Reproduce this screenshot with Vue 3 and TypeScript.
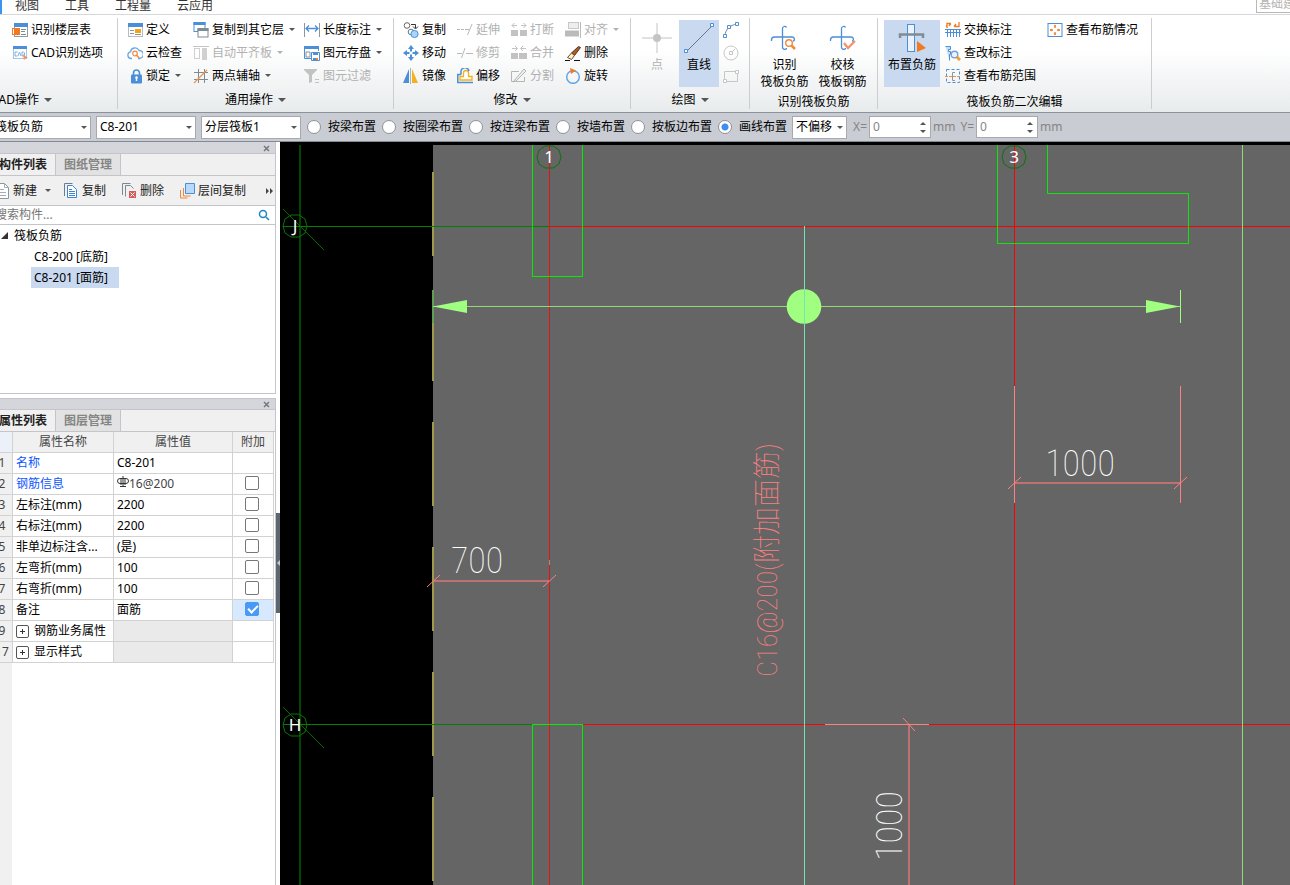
<script setup lang="ts">
import { ref } from 'vue'

interface Tool {
  icon: string
  label: string
  off?: boolean
  menu?: boolean
}

interface PropertyRow {
  no: string
  name: string
  value?: string
  key?: boolean
  rebar?: boolean
  check?: boolean
  group?: boolean
}

const blue = '#4a8fd8'
const grey = '#b9b9b9'

const icons: Record<string, string> = {
  floor: `<rect x="2.5" y="1.5" width="13" height="13" fill="#fff" stroke="#8d9aa8"/><path d="M2 1h14v4H2z" fill="${blue}"/><rect x=".5" y="6.500" width="7" height="6" fill="#fff" stroke="#f07a22"/><path d="M2 7h5v5H2z" fill="#f07a22"/><path d="M9 7.500h5M9 9.500h4M9 12.500h5" stroke="#7d8a96"/>`,
  cad: `<rect x="1.500" y="1.500" width="13" height="12" fill="#fff" stroke="#a5c4e6"/><path d="M1 1h14v3H1z" fill="${blue}"/><path d="M5.500 7H3v4h2.500M6 11l1.500-4L9 11M10 7v4h1.500l1-1V8l-1-1z" fill="none" stroke="#7fb0e4"/><path d="M11 9l5 4-3 .5-1 2z" fill="#f5906a"/>`,
  define: `<rect x="1.500" y="1.500" width="14" height="13" fill="#fff" stroke="#b7bcc1"/><path d="M1 1h15v4H1z" fill="${blue}"/><path d="M3 8.500h4M3 11.500h4M8 12.500h6" stroke="#8b97a3"/><path d="M8 7h6v4H8z" fill="#f6a21b"/>`,
  cloud: `<path d="M5 13.500H4a3.400 3.400 0 0 1-.5-6.700A4.500 4.500 0 0 1 12 5.500a4 4 0 0 1 .5 8H11" fill="none" stroke="#6aa9e8" stroke-width="1.300"/><circle cx="8" cy="8.500" r="2.300" fill="none" stroke="#f28a3c" stroke-width="1.200"/><path d="M9.700 10.300l2.500 2.700" stroke="#f28a3c" stroke-width="1.500"/>`,
  lock: `<path d="M6.500 7V5a3 3 0 0 1 6 0v2" fill="none" stroke="${blue}" stroke-width="1.600"/><rect x="4" y="6.500" width="11" height="9" rx="1" fill="${blue}"/><path d="M9.500 9v4" stroke="#fff" stroke-width="1.500"/><circle cx="9.500" cy="9.500" r="1.200" fill="#fff"/>`,
  floors: `<rect x="1" y=".5" width="11" height="9" fill="#fff" stroke="${blue}"/><path d="M.5 0h12v3H.5z" fill="${blue}"/><rect x="5" y="7" width="10" height="8" fill="#fff" stroke="#7f8c94"/><path d="M4.500 6h11v3h-11z" fill="#7f8c94"/>`,
  slab: `<path d="M0 1.500h16" stroke="#c4c4c4"/><rect x="1.500" y="3.500" width="5" height="10" fill="none" stroke="#d0d0d0"/><path d="M9 3h5v12H9z" fill="#d0d0d0"/>`,
  axis: `<path d="M5.500 1v14M11.500 1v14M1 4.500h14M1 11.500h14" stroke="#7e8a92"/><path d="M1 15L14 2" stroke="#f0914f" stroke-width="1.200"/>`,
  length: `<path d="M.5 1v14M15.500 1v14" stroke="#8c969e"/><path d="M2 6.500h12M5 3.500l-3 3 3 3M11 3.500l3 3-3 3" fill="none" stroke="${blue}" stroke-width="1.300"/>`,
  store: `<path d="M8 13.500H.500V1.500h14V6" fill="#fff" stroke="${blue}"/><path d="M0 1h15v3H0z" fill="${blue}"/><path d="M2 7h4v5H2z" fill="none" stroke="#87929b"/><path d="M7.500 7.500h8v8h-8z" fill="#fff" stroke="${blue}"/><path d="M9 8h5v2H9zM9 13h3v2H9z" fill="${blue}"/><path d="M12 13h2v2h-2z" fill="#f28030"/>`,
  filter: `<path d="M0 1h13v1L8 7v7l-3 1V7L0 2z" fill="#c2c2c2"/><path d="M11 11.500h4M11 14.500h4" stroke="#c2c2c2"/>`,
  copy: `<circle cx="4" cy="3.500" r="2.800" fill="#fff" stroke="#666"/><path d="M8 2.500h4.500V6M10 4.500L12.500 7 15 4.500" fill="none" stroke="#333"/><circle cx="8" cy="10" r="2.800" fill="#fff" stroke="#61788a"/><circle cx="11.500" cy="12" r="3.600" fill="#a9d4fb" stroke="${blue}"/>`,
  move: `<path d="M8 0l3 4H9v3H7V4H5zM8 16l3-4H9V9H7v3H5zM0 8l4-3v2h3v2H4v2zM16 8l-4-3v2H9v2h3v2z" fill="${blue}"/><path d="M6.500 6.500h3v3h-3z" fill="#fff"/>`,
  mirror: `<path d="M6 1v14H0z" fill="${blue}"/><path d="M9 1v14h6z" fill="#f5b01e"/><path d="M7.500 0v16" stroke="#aeb3b7"/>`,
  extend: `<path d="M0 7.500h9" stroke="${grey}" stroke-dasharray="3 1"/><path d="M9 7.500h3M10.500 13L15 2" stroke="${grey}"/>`,
  trim: `<path d="M0 8.500h5M4.500 13L8 3M9 8.500h7" stroke="${grey}" stroke-dasharray="12 1"/>`,
  offset: `<path d="M6.500 8V5a2.500 2.500 0 0 1 5 0v3.500H15V12H3V8.500h3.500z" fill="#fff" stroke="#f5b01e" stroke-width="1.300"/><path d="M4 6.500V4.500a4 4 0 0 1 8-1.500M4 6.500H.800v8H16" fill="none" stroke="${blue}" stroke-width="1.500"/>`,
  split: `<path d="M0 8h7v6H0zM9 8h7v6H9z" fill="#c2c2c2"/><path d="M6 3.500H1M3.500 1L1 3.500 3.500 6M10 3.500h5M12.500 1L15 3.500 12.500 6" fill="none" stroke="#c2c2c2"/>`,
  merge: `<path d="M0 8h7v6H0zM8 8h8v6H8z" fill="#c2c2c2"/><path d="M1 3.500h5M4 1l2.500 2.500L4 6M15 3.500h-5M12 1L9.500 3.500 12 6" fill="none" stroke="#c2c2c2"/>`,
  cut: `<path d="M8 3.500H.500v10h13V9" fill="none" stroke="#b5b5b5"/><path d="M2 14L13 1l2 2L5 13z" fill="#eee" stroke="#b5b5b5"/>`,
  align: `<rect x="3.500" y=".5" width="10" height="6" fill="#eee" stroke="#c8c8c8"/><path d="M0 8.500h14v6H0z" fill="#bbb"/><path d="M15.500 0v16" stroke="#bbb"/>`,
  erase: `<path d="M13.500 1.500l2 1-6 8-3-2.500z" fill="#ad5b27" stroke="#4f321f"/><path d="M6.500 8l3 2.500-3 4-4-2z" fill="#fff1b8" stroke="#5f4a3c"/><path d="M0 15.500h5M9 15.500h6" stroke="#111"/>`,
  rotate: `<circle cx="8" cy="9" r="6.300" fill="none" stroke="#65a6e6" stroke-width="1.500"/><path d="M5 0l6 2.500L6 6z" fill="#f07a22"/>`,
  arc: `<path d="M2 14C2 8 7 3 14 2" fill="none" stroke="#7a868e"/><path d="M.5 12.500h3v3h-3zM4.500 3.500h3v3h-3zM12.500.500h3v3h-3z" fill="#fff" stroke="${blue}"/>`,
  circle: `<circle cx="8" cy="8" r="7" fill="none" stroke="#c6c6c6"/><path d="M8 8l4-4" stroke="#c6c6c6"/><path d="M6.500 6.500h3v3h-3z" fill="#fff" stroke="#c6c6c6"/>`,
  rect: `<path d="M1.500 3.500h13v10h-13z" fill="none" stroke="#c6c6c6"/><path d="M12.500 2.500h3v3h-3zM.500 11.500h3v3h-3z" fill="#fff" stroke="#c6c6c6"/>`,
  swap: `<path d="M2 6V1.500h4M1 3.500L2.500 6M6 1.500L4 4M9 4.500h5V0M11 2L9 4.500" fill="none" stroke="#f07a22" stroke-width="1.300"/><path d="M0 7.500h16M0 10.500h16M2.500 7v8M5.500 7v8M8.500 7v8M11.500 7v8M14.500 7v8" stroke="${blue}"/>`,
  inspect: `<path d="M.500 1.500h5v3h-2v2h2v3h-1v6" fill="#c5defa" stroke="${blue}"/><circle cx="9.500" cy="9.500" r="3.300" fill="#eaf2ff" stroke="#7b9fd2" stroke-width="1.400"/><path d="M12 12l3 3" stroke="#f2a02c" stroke-width="3"/>`,
  range: `<rect x="1.500" y="1.500" width="13" height="13" fill="none" stroke="${blue}" stroke-dasharray="3 2"/><path d="M0 8.500h16" stroke="#f0914f" stroke-dasharray="3 1"/><path d="M10 4.500H7.500v8H10" fill="none" stroke="#8b979f"/>`,
  status: `<rect x="1" y="1.500" width="14" height="13" fill="#fff" stroke="${blue}"/><path d="M8 3v3M8 10v3M3 8h3M10 8h3" stroke="#f07a22" stroke-width="1.300"/><path d="M6.500 4.500h3L8 3zM6.500 11.500h3L8 13zM4.500 6.500v3L3 8zM11.500 6.500v3L13 8z" fill="#f07a22"/>`,
  point: `<path d="M16 1v30M1 16h30" stroke="#c4c4c4"/><circle cx="16" cy="16" r="4" fill="#c4c4c4"/>`,
  line: `<path d="M4 29L29 4" stroke="#6b7780"/><path d="M1.500 27.500h3v3h-3zM27.500 1.500h3v3h-3z" fill="#fff" stroke="${blue}"/>`,
  detect: `<path d="M18.500 5.500c-1-2-4-1-4 1V25c0 3 4 3 4 1M3.500 19v-1c0-2 1-3 3-3H24c3 0 3 4 1 4" fill="none" stroke="${blue}" stroke-width="1.300"/><circle cx="21" cy="21" r="3.300" fill="#fff" stroke="#f28a3c" stroke-width="1.400"/><path d="M23.500 23.500L27 27" stroke="#f28a3c" stroke-width="2.500"/>`,
  verify: `<path d="M18.500 5.500c-1-2-4-1-4 1V25c0 3 4 3 4 1M3.500 19v-1c0-2 1-3 3-3H24c3 0 3 4 1 4" fill="none" stroke="${blue}" stroke-width="1.300"/><path d="M17 21l4 5 7-7" fill="none" stroke="#f5906a" stroke-width="2.200"/>`,
  place: `<rect x="11.500" y="2.500" width="7" height="27" fill="#eaf2fd" stroke="${blue}"/><path d="M4 16v-3.500h23V16" fill="none" stroke="#808c93" stroke-width="2.500"/><path d="M21 19v11l9-4z" fill="#f07a22"/>`,
  fresh: `<path d="M2.500.500h7l4 4v11h-11z" fill="#fff" stroke="#8b979f"/><path d="M9.500.500v4h4M5 6.500h4M5 9.500h6M5 12.500h6" fill="none" stroke="#a3adb5"/>`,
  page: `<path d="M.500 13V.500h8" fill="none" stroke="#6d7c88"/><path d="M3.500 2.500h5l4 4v8h-9z" fill="#fff" stroke="#3d85d6"/><path d="M5 6.500h3M5 8.500h6M5 10.500h6M5 12.500h6" stroke="#3d85d6"/>`,
  remove: `<path d="M.500 12V.500h8" fill="none" stroke="#7d8a94"/><path d="M3.500 13.500v-11h5l3 3" fill="none" stroke="#7d8a94"/><path d="M7 8h7v7H7z" fill="#d65b5b"/><path d="M8.500 9.500l4 4M12.500 9.500l-4 4" stroke="#fff"/>`,
  layers: `<path d="M.500 7v8h7M3.500 5v8h7" fill="none" stroke="#f0873c"/><path d="M5.500.500h9v10h-9z" fill="#b9d9fb" stroke="${blue}"/>`,
}

const menus = ['视图', '工具', '工程量', '云应用']

const cadTools: Tool[] = [
  { icon: 'floor', label: '识别楼层表' },
  { icon: 'cad', label: 'CAD识别选项' },
]

const commonTools: Tool[][] = [
  [{ icon: 'define', label: '定义' }, { icon: 'cloud', label: '云检查' }, { icon: 'lock', label: '锁定', menu: true }],
  [{ icon: 'floors', label: '复制到其它层', menu: true }, { icon: 'slab', label: '自动平齐板', off: true, menu: true }, { icon: 'axis', label: '两点辅轴', menu: true }],
  [{ icon: 'length', label: '长度标注', menu: true }, { icon: 'store', label: '图元存盘', menu: true }, { icon: 'filter', label: '图元过滤', off: true }],
]

const editTools: Tool[][] = [
  [{ icon: 'copy', label: '复制' }, { icon: 'move', label: '移动' }, { icon: 'mirror', label: '镜像' }],
  [{ icon: 'extend', label: '延伸', off: true }, { icon: 'trim', label: '修剪', off: true }, { icon: 'offset', label: '偏移' }],
  [{ icon: 'split', label: '打断', off: true }, { icon: 'merge', label: '合并', off: true }, { icon: 'cut', label: '分割', off: true }],
  [{ icon: 'align', label: '对齐', off: true, menu: true }, { icon: 'erase', label: '删除' }, { icon: 'rotate', label: '旋转' }],
]

const rebarTools: Tool[][] = [
  [{ icon: 'swap', label: '交换标注' }, { icon: 'inspect', label: '查改标注' }, { icon: 'range', label: '查看布筋范围' }],
  [{ icon: 'status', label: '查看布筋情况' }],
]

const shapes = [
  { icon: 'arc', label: '弧线' },
  { icon: 'circle', label: '圆' },
  { icon: 'rect', label: '矩形' },
]

const modes = ['按梁布置', '按圈梁布置', '按连梁布置', '按墙布置', '按板边布置', '画线布置']
const mode = ref('画线布置')
const offsetX = ref('0')
const offsetY = ref('0')
const keyword = ref('')

const listTools: Tool[] = [
  { icon: 'fresh', label: '新建', menu: true },
  { icon: 'page', label: '复制' },
  { icon: 'remove', label: '删除' },
  { icon: 'layers', label: '层间复制' },
]

const members = ['C8-200 [底筋]', 'C8-201 [面筋]']
const selected = ref(members[1])

const rows = ref<PropertyRow[]>([
  { no: '1', name: '名称', value: 'C8-201', key: true },
  { no: '2', name: '钢筋信息', value: '16@200', key: true, rebar: true, check: false },
  { no: '3', name: '左标注(mm)', value: '2200', check: false },
  { no: '4', name: '右标注(mm)', value: '2200', check: false },
  { no: '5', name: '非单边标注含...', value: '(是)', check: false },
  { no: '6', name: '左弯折(mm)', value: '100', check: false },
  { no: '7', name: '右弯折(mm)', value: '100', check: false },
  { no: '8', name: '备注', value: '面筋', check: true },
  { no: '9', name: '钢筋业务属性', group: true },
  { no: '17', name: '显示样式', group: true },
])

const bubbles = [
  { x: 295, y: 226, label: 'J' },
  { x: 295, y: 725, label: 'H' },
  { x: 549, y: 157, label: '1' },
  { x: 1014, y: 157, label: '3' },
]
const decagon = '12,0 10,7 4,11 -4,11 -10,7 -12,0 -10,-7 -4,-11 4,-11 10,-7'
</script>

<template>
  <div class="shell">
    <nav class="menu">
      <span class="menu-active"></span>
      <button v-for="m in menus" :key="m" class="menu-item">{{ m }}</button>
      <span class="scope">基础建</span>
    </nav>

    <header class="ribbon">
      <section class="group g-cad">
        <div class="columns">
          <div class="column">
            <button v-for="t in cadTools" :key="t.label" class="tool">
              <svg class="icon" viewBox="0 0 16 16" v-html="icons[t.icon]"></svg>{{ t.label }}
            </button>
          </div>
        </div>
        <button class="caption">CAD操作<i class="caret big"></i></button>
      </section>

      <section class="group g-common">
        <div class="columns">
          <div v-for="(col, i) in commonTools" :key="i" class="column">
            <button v-for="t in col" :key="t.label" class="tool" :disabled="t.off">
              <svg class="icon" viewBox="0 0 16 16" v-html="icons[t.icon]"></svg>{{ t.label }}<i v-if="t.menu" class="caret"></i>
            </button>
          </div>
        </div>
        <button class="caption">通用操作<i class="caret big"></i></button>
      </section>

      <section class="group g-edit">
        <div class="columns">
          <div v-for="(col, i) in editTools" :key="i" class="column">
            <button v-for="t in col" :key="t.label" class="tool" :disabled="t.off">
              <svg class="icon" viewBox="0 0 16 16" v-html="icons[t.icon]"></svg>{{ t.label }}<i v-if="t.menu" class="caret"></i>
            </button>
          </div>
        </div>
        <button class="caption">修改<i class="caret big"></i></button>
      </section>

      <section class="group g-draw">
        <div class="columns">
          <button class="large" disabled>
            <svg class="icon-lg" viewBox="0 0 32 32" v-html="icons.point"></svg><span>点</span>
          </button>
          <button class="large active">
            <svg class="icon-lg" viewBox="0 0 32 32" v-html="icons.line"></svg><span>直线</span>
          </button>
          <div class="column">
            <button v-for="s in shapes" :key="s.icon" class="tool" :aria-label="s.label">
              <svg class="icon" viewBox="0 0 16 16" v-html="icons[s.icon]"></svg>
            </button>
          </div>
        </div>
        <button class="caption">绘图<i class="caret big"></i></button>
      </section>

      <section class="group g-detect">
        <div class="columns">
          <button class="large">
            <svg class="icon-lg" viewBox="0 0 32 32" v-html="icons.detect"></svg><span>识别<br>筏板负筋</span>
          </button>
          <button class="large">
            <svg class="icon-lg" viewBox="0 0 32 32" v-html="icons.verify"></svg><span>校核<br>筏板钢筋</span>
          </button>
        </div>
        <div class="caption low">识别筏板负筋</div>
      </section>

      <section class="group g-rebar">
        <div class="columns">
          <button class="large active">
            <svg class="icon-lg" viewBox="0 0 32 32" v-html="icons.place"></svg><span>布置负筋</span>
          </button>
          <div v-for="(col, i) in rebarTools" :key="i" class="column">
            <button v-for="t in col" :key="t.label" class="tool">
              <svg class="icon" viewBox="0 0 16 16" v-html="icons[t.icon]"></svg>{{ t.label }}
            </button>
          </div>
        </div>
        <div class="caption low">筏板负筋二次编辑</div>
      </section>
    </header>

    <div class="options">
      <label class="pick kind"><select aria-label="构件类型"><option>筏板负筋</option></select></label>
      <label class="pick"><select aria-label="构件"><option>C8-201</option></select></label>
      <label class="pick"><select aria-label="分层"><option>分层筏板1</option></select></label>
      <div class="modes">
        <label v-for="m in modes" :key="m" class="mode">
          <input v-model="mode" type="radio" name="mode" :value="m">{{ m }}
        </label>
      </div>
      <label class="pick narrow"><select aria-label="偏移方式"><option>不偏移</option></select></label>
      <div class="measure">
        <label for="offset-x">X=</label>
        <span class="spin">
          <input id="offset-x" v-model="offsetX" type="text">
          <span class="steps"><button class="up" aria-label="X 增加"></button><button class="down" aria-label="X 减少"></button></span>
        </span>
        <span>mm</span>
      </div>
      <div class="measure">
        <label for="offset-y">Y=</label>
        <span class="spin">
          <input id="offset-y" v-model="offsetY" type="text">
          <span class="steps"><button class="up" aria-label="Y 增加"></button><button class="down" aria-label="Y 减少"></button></span>
        </span>
        <span>mm</span>
      </div>
    </div>

    <main class="work">
      <aside class="side">
        <section class="panel">
          <div class="title">
            <button class="close" aria-label="关闭"><svg viewBox="0 0 7 7"><path d="M1 1l5 5M6 1L1 6" /></svg></button>
          </div>
          <div class="tabs">
            <button class="tab on">构件列表</button><button class="tab">图纸管理</button>
          </div>
          <div class="list-tools">
            <button v-for="t in listTools" :key="t.label" class="list-tool">
              <svg class="icon-sm" viewBox="0 0 15 16" v-html="icons[t.icon]"></svg>{{ t.label }}<i v-if="t.menu" class="caret"></i>
            </button>
            <button class="more" aria-label="更多"><svg viewBox="0 0 8 6"><path d="M0 0l3 3-3 3zM4 0l3 3-3 3z" /></svg></button>
          </div>
          <div class="search">
            <input v-model="keyword" type="text" placeholder="搜索构件..." aria-label="搜索构件">
            <svg viewBox="0 0 12 12"><circle cx="5" cy="5" r="3.500" /><path d="M8 8l3 3" /></svg>
          </div>
          <div class="tree">
            <div class="root"><i class="fold"></i>筏板负筋</div>
            <button v-for="m in members" :key="m" class="leaf" :class="{ chosen: m === selected }" @click="selected = m">{{ m }}</button>
          </div>
        </section>

        <section class="panel props">
          <div class="title">
            <button class="close" aria-label="关闭"><svg viewBox="0 0 7 7"><path d="M1 1l5 5M6 1L1 6" /></svg></button>
          </div>
          <div class="tabs">
            <button class="tab on">属性列表</button><button class="tab">图层管理</button>
          </div>
          <div class="sheet">
            <table>
              <thead>
                <tr><th class="no"></th><th class="name">属性名称</th><th class="value">属性值</th><th class="extra">附加</th></tr>
              </thead>
              <tbody>
                <tr v-for="r in rows" :key="r.no">
                  <td class="no">{{ r.no }}</td>
                  <td class="name" :class="{ key: r.key }">
                    <button v-if="r.group" class="expand" :aria-label="'展开' + r.name"></button>{{ r.name }}
                  </td>
                  <td class="value" :class="{ blank: r.group, rebar: r.rebar }">
                    <svg v-if="r.rebar" class="grade" viewBox="0 0 12 12"><path d="M6 0v11M4 2v7M8 2v7M3 10.500h6M4 2.500H3a2.500 2.500 0 0 0 0 5h6a2.500 2.500 0 0 0 0-5H4" /></svg>{{ r.value }}
                  </td>
                  <td class="extra" :class="{ ticked: r.check }">
                    <input v-if="r.check !== undefined" v-model="r.check" type="checkbox" :aria-label="r.name + ' 附加'">
                  </td>
                </tr>
              </tbody>
            </table>
          </div>
        </section>
      </aside>

      <div class="splitter"><button class="handle" aria-label="收起"></button></div>

      <div class="stage">
        <svg class="drawing" viewBox="280 145 1010 740" preserveAspectRatio="xMinYMin slice">
          <rect x="433" y="145" width="3000" height="3000" fill="#656565" />
          <g fill="none" shape-rendering="crispEdges">
            <path d="M300 145V2000" stroke="#004600" stroke-width="2" />
            <path d="M433 172V2000" stroke="#a09b4b" stroke-width="2" stroke-dasharray="84 41" />
            <path d="M433 290v33" stroke="#5fa050" stroke-width="2" />
            <path d="M283 226.500H549M283 724.500H533" stroke="#008000" />
            <path d="M549 226.500H3000M583 724.500H3000M1014.500 145V2000" stroke="#f00" />
            <path d="M549.500 145V2000" stroke="#e01414" />
            <path d="M549.500 560v5" stroke="#b98080" />
            <path d="M532.500 145V276.500H582.500V145M532.500 2000V724.500H582.500V2000" stroke="#00ee00" />
            <path d="M997.500 145V243.500H1188.500V193.500H1047.500V145" stroke="#0be60b" />
            <path d="M433 306.500H1180M1242.500 145V2000" stroke="#8fdc74" />
            <path d="M1180.500 290V323" stroke="#a0ff80" />
            <path d="M1014.500 386V503M1180.500 386V503M825 724.500H929" stroke="#ff8080" />
            <path d="M1015 483H1180M433 581H549M909 725V2000" stroke="#bd7272" stroke-width="2" />
          </g>
          <path d="M433 306.500L467 300V313zM1180 306.500L1146 300V313z" fill="#a0ff80" />
          <circle cx="804" cy="306.500" r="17.300" fill="#a0ff80" />
          <path d="M804.500 226V2000" stroke="#72e4b4" shape-rendering="crispEdges" />
          <path d="M1008 489L1021 477M1174 489L1187 477M427 587L440 575M543 587L556 575M903 718L915 731" stroke="#ff8080" />
          <path d="M283 209L324 250M283 707L324 748" stroke="#006c00" />
          <g v-for="b in bubbles" :key="b.label" :transform="`translate(${b.x} ${b.y})`">
            <polygon :points="decagon" fill="none" stroke="#087508" />
            <text class="axis" y="6">{{ b.label }}</text>
          </g>
          <text class="dim" x="1080" y="476">1000</text>
          <text class="dim" x="477" y="573">700</text>
          <text class="dim" transform="translate(902 826) rotate(-90)">1000</text>
          <text class="mark" transform="translate(777 560) rotate(-90)">C16@200(附加面筋)</text>
        </svg>
      </div>
    </main>
  </div>
</template>

<style>
html,
body {
  overflow: hidden;
}
</style>

<style scoped>
* {
  box-sizing: border-box;
}

.shell {
  display: flex;
  flex-direction: column;
  width: calc(100vw + 12px);
  height: calc(100vh + 12px);
  margin: -12px 0 0 -12px;
  background: #fff;
  color: #000;
  font: 12px/18px "Noto Sans", "Noto Sans CJK SC", sans-serif;
}

button,
input,
select {
  margin: 0;
  padding: 0;
  border: 0;
  background: none;
  color: inherit;
  font: inherit;
  white-space: nowrap;
}

.menu {
  display: flex;
  flex: none;
  gap: 26px;
  height: 27px;
  border-bottom: 1px solid #d6d8da;
}

.menu-item {
  height: 18px;
  margin-top: 9px;
  color: #333;
}

.menu-active {
  width: 14px;
  margin-right: -13px;
  background: #3b93f0;
}

.scope {
  width: 34px;
  height: 25px;
  margin-left: auto;
  padding: 8px 0 0 2px;
  overflow: hidden;
  border: solid #b8b8b8;
  border-width: 0 0 1px 1px;
  color: #b4b4b4;
  line-height: 16px;
  white-space: nowrap;
}

.ribbon {
  display: flex;
  flex: none;
  height: 98px;
  border-bottom: 1px solid #8b9299;
  background: linear-gradient(#fff 35%, #e8ebec);
}

.group {
  display: flex;
  flex: none;
  flex-direction: column;
  margin: 3px 0;
  border-right: 1px solid #cbcdcf;
}

.columns {
  display: flex;
  flex: none;
  height: 69px;
}

.column {
  display: flex;
  flex-direction: column;
}

.tool {
  display: flex;
  align-items: center;
  gap: 3px;
  height: 23px;
  white-space: nowrap;
}

.tool:disabled,
.large:disabled {
  color: #b1b1b1;
}

.icon {
  flex: none;
  width: 16px;
  height: 16px;
}

.caret {
  width: 0;
  height: 0;
  margin-left: 2px;
  border: solid transparent;
  border-width: 3px 3px 0;
  border-top-color: #555;
}

.tool:disabled .caret {
  border-top-color: #b1b1b1;
}

.caret.big {
  margin: 0;
  border-width: 4px 4px 0;
  border-top-color: #555;
}

.caption {
  display: flex;
  flex: none;
  align-items: center;
  justify-content: center;
  gap: 5px;
  height: 18px;
  margin-top: 4px;
}

.caption.low {
  margin-top: 6px;
}

.large {
  display: flex;
  flex-direction: column;
  align-items: center;
  justify-content: flex-start;
  height: 67px;
  margin-top: 2px;
  line-height: 17px;
}

.large span {
  margin-top: 2px;
}

.active {
  background: #c8d9f0;
}

.icon-lg {
  flex: none;
  width: 32px;
  height: 32px;
  margin-top: 2px;
}

.g-cad {
  width: 130px;
}

.g-cad .columns {
  padding-left: 24px;
}

.g-cad .caption {
  align-self: flex-start;
  padding-left: 3px;
}

.g-common {
  width: 276px;
}

.g-common .columns {
  display: grid;
  grid-template-columns: 66px 111px auto;
  padding-left: 9px;
}

.g-edit {
  width: 237px;
}

.g-edit .columns {
  display: grid;
  grid-template-columns: repeat(4, 54px);
  padding-left: 9px;
}

.g-draw {
  width: 119px;
}

.g-draw .columns {
  padding-left: 10px;
}

.g-draw .large {
  width: 32px;
  margin-right: 6px;
}

.g-draw .large.active {
  width: 40px;
  margin-right: 4px;
}

.g-detect {
  width: 128px;
}

.g-detect .columns {
  justify-content: center;
  gap: 10px;
}

.g-rebar {
  width: 274px;
}

.g-rebar .columns {
  padding-left: 6px;
}

.g-rebar .large {
  width: 56px;
  margin-right: 5px;
}

.g-rebar .column {
  width: 102px;
}

.options {
  display: flex;
  flex: none;
  align-items: center;
  gap: 5px;
  height: 29px;
  border-bottom: 1px solid #828b94;
  background: #c9ccd3;
}

.pick {
  position: relative;
  width: 100px;
}

.pick.kind {
  width: 103px;
}

.pick.narrow {
  width: 55px;
  margin-right: 1px;
}

.pick::after {
  position: absolute;
  top: 10px;
  right: 4px;
  border: solid transparent;
  border-width: 3px 3px 0;
  border-top-color: #555;
  content: "";
  pointer-events: none;
}

.pick select {
  display: block;
  width: 100%;
  height: 23px;
  padding-left: 3px;
  border: 1px solid #a6a9ae;
  background: #fff;
  appearance: none;
}

.kind select {
  padding-left: 6px;
}

.modes {
  display: flex;
  gap: 6px;
  margin-left: 1px;
}

.mode {
  display: flex;
  align-items: center;
  gap: 7px;
  white-space: nowrap;
}

.mode input {
  width: 14px;
  height: 14px;
  border: 1px solid #8f9296;
  border-radius: 50%;
  background: #fff;
  appearance: none;
}

.mode input:checked {
  background: radial-gradient(circle, #3e8df0 3px, #fff 4px);
}

.measure {
  display: flex;
  align-items: center;
  gap: 2px;
  color: #858585;
}

.spin {
  display: flex;
  width: 62px;
  height: 22px;
  border: 1px solid #a6a9ae;
  background: #fff;
}

.spin input {
  flex: 1;
  width: 20px;
  padding-left: 3px;
  outline: 0;
}

.steps {
  display: flex;
  flex-direction: column;
  justify-content: center;
  gap: 5px;
  width: 10px;
}

.up,
.down {
  width: 0;
  height: 0;
  border: solid transparent;
  border-width: 0 3px 3px;
  border-bottom-color: #555;
}

.down {
  border-width: 3px 3px 0;
  border-top-color: #555;
}

.work {
  display: flex;
  flex: 1;
  min-height: 0;
}

.side {
  display: flex;
  flex: none;
  flex-direction: column;
  gap: 4px;
  width: 288px;
}

.panel {
  border: solid #c3c5ca;
  border-width: 0 1px 1px 0;
}

.props {
  display: flex;
  flex: 1;
  flex-direction: column;
  border-width: 1px 1px 0 0;
}

.title {
  display: flex;
  justify-content: flex-end;
  height: 12px;
  padding: 3px 5px 0 0;
  border-bottom: 1px solid #c3c5ca;
  background: #d5d6dc;
}

.props .title {
  height: 11px;
  padding-top: 2px;
}

.close {
  width: 7px;
  height: 7px;
}

.close svg {
  display: block;
  fill: none;
  stroke: #777;
  stroke-width: 1.500;
}

.tabs {
  display: flex;
  height: 22px;
  border-bottom: 1px solid #c3c5ca;
  background: #f0f0f0;
}

.tab {
  width: 65px;
  border-right: 1px solid #c3c5ca;
  background: #e2e2e2;
  color: #858585;
  font-weight: 700;
}

.tab.on {
  width: 68px;
  padding-left: 3px;
  background: #f0f0f0;
  color: #222;
}

.list-tools {
  display: grid;
  grid-template-columns: 69px 58px 58px 1fr auto;
  align-items: center;
  height: 30px;
  padding: 0 1px 0 7px;
  border-bottom: 1px solid #c3c5ca;
  background: #f0f0f0;
  color: #222;
}

.list-tool {
  display: flex;
  align-items: center;
  gap: 3px;
}

.list-tool .caret {
  margin-left: 5px;
}

.icon-sm {
  width: 15px;
  height: 16px;
}

.more,
.more svg {
  display: block;
  width: 8px;
  height: 6px;
  fill: #444;
}

.search {
  display: flex;
  align-items: center;
  height: 19px;
  padding: 0 5px 0 7px;
  border-bottom: 1px solid #c3c5ca;
}

.search input {
  flex: 1;
  height: 18px;
  outline: 0;
}

.search input::placeholder {
  color: #777;
}

.search svg {
  width: 12px;
  height: 12px;
  fill: none;
  stroke: #1c86c8;
  stroke-width: 1.500;
}

.tree {
  display: flex;
  flex-direction: column;
  align-items: flex-start;
  min-height: 168px;
  line-height: 21px;
}

.root {
  display: flex;
  align-items: center;
  gap: 6px;
  padding-left: 13px;
}

.fold {
  border: solid transparent;
  border-width: 0 0 7px 7px;
  border-bottom-color: #333;
}

.leaf {
  height: 21px;
  margin-left: 43px;
  padding: 0 11px 0 3px;
}

.chosen {
  background: #c8d9f0;
}

.sheet {
  flex: 1;
  background: linear-gradient(90deg, #f0f0f0 24px, #fff 24px);
}

table {
  width: 286px;
  border-spacing: 0;
  table-layout: fixed;
}

th,
td {
  height: 21px;
  padding: 0 3px;
  border: solid #d2d2d2;
  border-width: 0 1px 1px 0;
  background: #fff;
  line-height: 20px;
  text-align: left;
  white-space: nowrap;
}

th {
  background: #f0f0f0;
  color: #444;
  font-weight: 400;
  text-align: center;
}

.no {
  width: 25px;
  padding: 0 0 0 4px;
  background: #f0f0f0;
  color: #444;
  text-align: center;
}

th.no {
  background: #ecf1f9;
}

.name {
  width: 101px;
}

.value {
  width: 119px;
}

.extra {
  text-align: center;
}

td.extra {
  padding: 0 4px 2px 2px;
}

.key {
  color: #0b55ff;
}

.rebar {
  color: #444;
}

.blank {
  background: #eaeaea;
}

.ticked {
  background: #d6e9ff;
}

.grade {
  width: 12px;
  height: 12px;
  fill: none;
  stroke: #333;
}

.extra input {
  display: block;
  width: 14px;
  height: 14px;
  margin: 0 auto;
  border: 1px solid #777;
  border-radius: 2px;
  background: #fff;
  appearance: none;
}

.extra input:checked {
  border-color: #4a9af5;
  background: #4a9af5;
}

.extra input:checked::after {
  display: block;
  width: 8px;
  height: 4px;
  margin: 2px;
  border: solid #fff;
  border-width: 0 0 2px 2px;
  content: "";
  transform: rotate(-45deg);
}

.expand {
  width: 13px;
  height: 13px;
  margin-right: 5px;
  border: 1px solid #555;
  border-radius: 2px;
  background:
    linear-gradient(#333, #333) center / 5px 1px no-repeat,
    linear-gradient(#333, #333) center / 1px 5px no-repeat;
  vertical-align: -2px;
}

.splitter {
  display: flex;
  flex: none;
  align-items: center;
  width: 4px;
  padding-top: 98px;
  background: #fff;
}

.handle {
  width: 4px;
  height: 100px;
  background: #5d6570;
}

.handle::after {
  display: block;
  border: solid transparent;
  border-width: 3px 3px 3px 0;
  border-right-color: #c5c9ce;
  content: "";
}

.stage {
  flex: 1;
  min-width: 0;
  padding-top: 3px;
  background: #000;
}

.drawing {
  display: block;
  width: 100%;
  height: 100%;
}

.axis {
  fill: #fff;
  font: 17px "Noto Sans", sans-serif;
  text-anchor: middle;
}

.dim,
.mark {
  fill: #fff;
  font: 100 36px "Roboto Condensed", "Liberation Sans Narrow", Lato, sans-serif;
  text-anchor: middle;
}

.mark {
  fill: #ff8080;
  font: 100 28px "Roboto Condensed", "Liberation Sans Narrow", Lato, "Noto Sans CJK SC", sans-serif;
}
</style>
